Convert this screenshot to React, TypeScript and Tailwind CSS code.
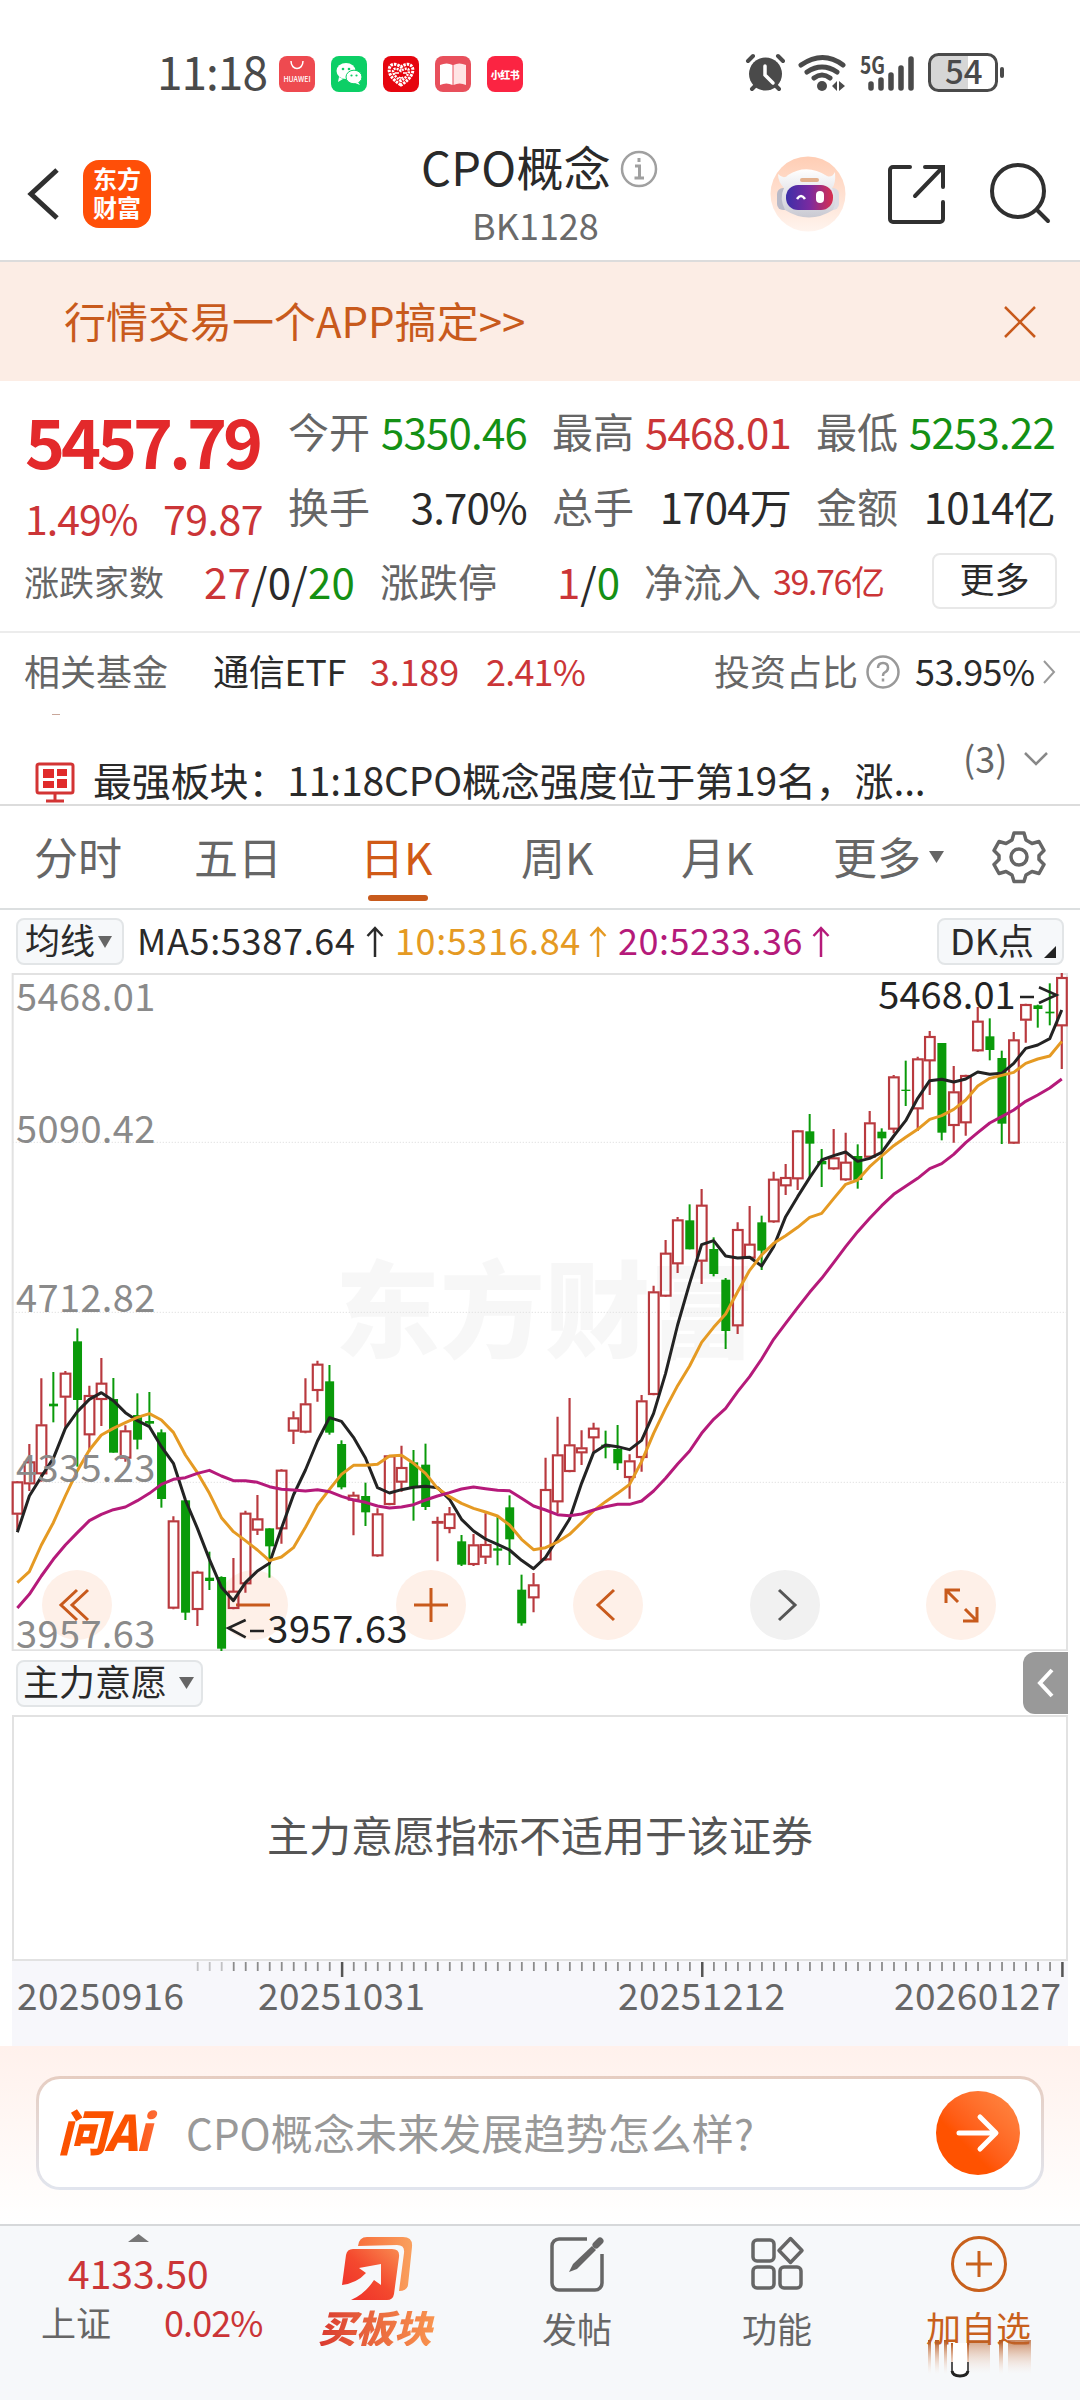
import type { ReactNode } from 'react';

type Candle = [dir: 'u' | 'd', top: number, bottom: number, high: number, low: number];

const UP = '#b93a3f';
const DOWN = '#0a9a0a';
const STEP = 36.015;
const FIRST = 52;

// [direction, body top, body bottom, high, low], grouped by the offset their values start from
const candleGroups: { dy: number; rows: Candle[] }[] = [
  {
    dy: 960,
    rows: [
      ['u', 605, 703, 603, 750],
      ['u', 545, 612, 492, 633],
      ['u', 434, 582, 295, 605],
      ['d', 371, 379, 276, 427],
      ['u', 279, 352, 273, 445],
      ['d', 184, 360, 145, 560],
      ['u', 346, 465, 317, 515],
      ['u', 309, 359, 234, 438],
      ['d', 357, 518, 294, 518],
      ['u', 452, 535, 436, 545],
      ['d', 405, 479, 340, 508],
      ['d', 423, 431, 336, 438],
      ['d', 457, 657, 448, 683],
      ['u', 722, 985, 709, 988],
      ['d', 661, 998, 661, 1020],
      ['u', 876, 989, 872, 1038],
      ['d', 893, 903, 815, 930],
      ['d', 891, 1106, 889, 1115],
      ['u', 933, 986, 834, 988],
      ['u', 699, 912, 692, 938],
      ['u', 716, 751, 645, 765],
      ['d', 745, 799, 745, 893],
      ['u', 570, 747, 568, 791],
      ['u', 413, 454, 394, 492],
      ['u', 371, 457, 295, 460],
      ['u', 252, 332, 242, 365],
      ['d', 304, 458, 255, 464],
      ['d', 492, 622, 481, 628],
      ['u', 645, 661, 635, 766],
    ],
  },
  {
    dy: 1140,
    rows: [
      ['d', 468, 517, 428, 558],
      ['u', 521, 648, 505, 650],
      ['u', 347, 494, 345, 496],
      ['u', 382, 427, 317, 455],
      ['d', 367, 442, 330, 542],
      ['d', 374, 501, 311, 510],
      ['u', 544, 550, 530, 664],
      ['u', 521, 566, 501, 580],
      ['d', 604, 674, 585, 678],
      ['u', 614, 674, 582, 678],
      ['u', 613, 652, 520, 672],
      ['d', 625, 632, 528, 676],
      ['d', 502, 598, 466, 675],
      ['d', 749, 850, 704, 857],
      ['u', 734, 774, 699, 817],
    ],
  },
  {
    dy: 570,
    rows: [
      ['u', 1018, 1230, 923, 1232],
      ['u', 914, 1056, 800, 1090],
      ['u', 884, 965, 744, 967],
      ['u', 893, 909, 841, 945],
      ['u', 834, 864, 818, 910],
      ['d', 884, 893, 842, 925],
      ['d', 897, 940, 825, 960],
      ['u', 932, 983, 913, 1046],
      ['u', 752, 923, 735, 965],
      ['u', 425, 734, 407, 736],
      ['u', 309, 439, 270, 441],
      ['u', 209, 342, 201, 369],
      ['d', 211, 298, 163, 298],
      ['u', 165, 334, 117, 402],
      ['d', 297, 372, 262, 379],
      ['d', 389, 543, 384, 597],
      ['u', 238, 528, 217, 552],
      ['u', 282, 325, 168, 325],
      ['d', 217, 302, 197, 360],
      ['u', 87, 216, 65, 218],
    ],
  },
  {
    dy: 0,
    rows: [
      ['u', 652, 678, 612, 705],
      ['u', 512, 657, 510, 690],
      ['d', 514, 551, 462, 655],
      ['d', 603, 613, 567, 681],
      ['u', 593, 627, 507, 629],
      ['u', 606, 660, 518, 662],
      ['d', 588, 660, 553, 686],
      ['u', 488, 592, 453, 594],
      ['d', 515, 535, 505, 657],
      ['u', 350, 508, 345, 520],
      ['d', 389, 393, 302, 438],
      ['u', 296, 447, 290, 513],
      ['u', 229, 303, 213, 405],
      ['d', 249, 518, 249, 541],
      ['u', 395, 497, 318, 548],
      ['u', 346, 489, 344, 527],
      ['u', 183, 273, 141, 275],
      ['d', 229, 270, 175, 301],
      ['d', 294, 491, 272, 552],
      ['u', 239, 550, 216, 552],
      ['u', 133, 181, 131, 248],
      ['d', 136, 147, 134, 203],
      ['d', 155, 160, 70, 196],
      ['u', 52, 198, 38, 327],
    ],
  },
];

const candles: Candle[] = candleGroups.flatMap(({ dy, rows }) =>
  rows.map(([dir, a, b, c, d]): Candle => [dir, a + dy, b + dy, c + dy, d + dy]),
);

const averages = [
  {
    color: '#232323',
    groups: [
      { dy: 960, v: [757, 648, 590, 535, 445, 395, 358, 338, 362, 398, 422, 440, 500, 550, 660, 745, 838, 922, 962, 908, 873, 850, 745, 645, 570, 483, 413, 424, 472] },
      { dy: 1140, v: [354, 443, 459, 449, 442, 439, 443, 478, 538, 573, 597, 613, 630, 661, 686] },
      { dy: 570, v: [1222, 1165, 1107, 1000, 908, 885, 890, 899, 871, 790, 670, 525, 400, 284, 272, 318, 324, 322, 348, 290, 200] },
      { dy: 0, v: [710, 653, 600, 587, 576, 604, 595, 577, 528, 482, 415, 362, 358, 366, 357, 336, 343, 340, 310, 265, 255, 236, 150] },
    ],
  },
  {
    color: '#e59a23',
    groups: [
      { dy: 960, v: [908, 875, 795, 728, 648, 572, 510, 465, 445, 428, 412, 401, 420, 457, 525, 578, 640, 713, 755, 782, 810, 842, 831, 803, 742, 675, 628, 583, 556] },
      { dy: 1140, v: [376, 373, 348, 346, 370, 400, 445, 470, 490, 505, 516, 528, 555, 598, 629] },
      { dy: 570, v: [1193, 1176, 1153, 1118, 1082, 1055, 1030, 1003, 935, 850, 775, 707, 648, 577, 532, 492, 425, 361, 315, 280, 257, 232, 202, 190] },
      { dy: 0, v: [716, 673, 660, 620, 588, 557, 532, 508, 478, 467, 448, 420, 378, 355, 346, 337, 310, 297, 288, 244] },
    ],
  },
  {
    color: '#b51a7a',
    groups: [
      { dy: 960, v: [984, 943, 888, 838, 795, 758, 722, 703, 689, 681, 662, 640, 613, 598, 593, 580, 571, 588, 602, 602, 607, 620, 628, 630, 633, 629, 635, 649, 660] },
      { dy: 1140, v: [487, 498, 504, 501, 494, 480, 468, 458, 447, 441, 446, 451, 452, 475, 498] },
      { dy: 570, v: [1080, 1094, 1097, 1092, 1080, 1070, 1063, 1063, 1053, 1023, 985, 942, 903, 850, 808, 775, 725, 680, 627, 568, 520, 473, 427, 385] },
      { dy: 0, v: [908, 860, 815, 775, 737, 703, 679, 655, 626, 611, 583, 548, 518, 489, 470, 450, 424, 405, 384, 357] },
    ],
  },
];

function linePoints(groups: { dy: number; v: number[] }[]) {
  return groups
    .flatMap(({ dy, v }) => v.map((n) => n + dy))
    .map((y, i) => `${FIRST + i * STEP},${y}`)
    .join(' ');
}

function StatusBar() {
  return (
    <div className="flex h-[116px] items-start pt-[52px] pl-[157px] text-[#4a4a4a]">
      <span className="-mt-[5px] w-[122px] text-[46px] leading-none tracking-[-1px]">11:18</span>
      <div className="flex gap-4 pt-1">
        <div className="flex size-9 flex-col items-center rounded-lg bg-[#ee4a50] text-white">
          <svg width="16" height="16" viewBox="0 0 16 16" fill="none" stroke="currentColor" strokeWidth="1.5">
            <path d="M2 5c0 10 12 10 12 0" />
          </svg>
          <span className="mt-0.5 text-[7px] leading-[10px] font-medium">HUAWEI</span>
        </div>
        <div className="size-9 rounded-lg bg-[#0ccf66]">
          <svg viewBox="0 0 36 36">
            <ellipse cx="15" cy="15" rx="9.5" ry="8" fill="#fff" />
            <path d="M8 21l-1 5 5-3z" fill="#fff" />
            <ellipse cx="23" cy="21" rx="8" ry="6.8" fill="#fff" stroke="#0ccf66" />
            <path d="M27 26l2 3-5-2z" fill="#fff" />
            <g fill="#0ccf66">
              <circle cx="12" cy="13" r="1.3" />
              <circle cx="18" cy="13" r="1.3" />
              <circle cx="20.5" cy="19.5" r="1.1" />
              <circle cx="25.5" cy="19.5" r="1.1" />
            </g>
          </svg>
        </div>
        <div className="size-9 rounded-lg bg-[#e6050f]">
          <svg viewBox="0 0 36 36" fill="none" stroke="#fff">
            <path d="M18 29C-2 17 7 2 18 11 29 2 38 17 18 29z" strokeWidth="3" strokeDasharray="2.5 1" />
            <path d="M18 25C5 16 10 9 18 15 26 9 31 16 18 25z" strokeWidth="2.5" strokeDasharray="2 1" />
            <path d="M12 17h4M20 17h4M16 21q2 2 4 0" strokeWidth="1.5" />
          </svg>
        </div>
        <div className="size-9 rounded-lg bg-[#e8505c]">
          <svg viewBox="0 0 36 36">
            <path d="M5 9q7-3 12.5 0v20q-6-3-12.5 0z" fill="#fff" />
            <path d="M31 9q-7-3-12.5 0v20q6-3 12.5 0z" fill="#ffe4e4" />
          </svg>
        </div>
        <div className="flex size-9 items-center justify-center rounded-lg bg-[#fb2442] text-[10px] font-black tracking-[-0.5px] text-white">
          小红书
        </div>
      </div>
      <svg className="ml-[217px]" width="270" height="44" viewBox="0 0 270 44" fill="none" stroke="#4a4a4a" strokeLinecap="round">
        {/* alarm */}
        <circle cx="25.5" cy="22" r="16.5" fill="#4a4a4a" stroke="none" />
        <path d="M8 9l5-5M38 4l5 5M12 37l4-4M39 37l-4-4" strokeWidth="4" />
        <path d="M25 14v9l8 8" stroke="#fff" strokeWidth="3.5" />
        {/* wifi */}
        <g strokeWidth="5">
          <path d="M61 13q22-15 42 0" />
          <path d="M67 20q15-10 30 0" />
          <path d="M74 26q8-6 16 0" />
        </g>
        <circle cx="82" cy="34" r="5" fill="#4a4a4a" stroke="none" />
        <path d="M97 29v10l-5-5zM99 29v10l6-5z" fill="#4a4a4a" stroke="none" />
        {/* signal */}
        <g strokeWidth="5.5">
          <path d="M131 32v4M141 28v8M151 23v13M161 16v20M171 7v29" />
        </g>
        <text x="120" y="22" fontSize="24" fontWeight="700" fill="#4a4a4a" stroke="none" textLength="25" lengthAdjust="spacingAndGlyphs">
          5G
        </text>
        {/* battery */}
        <path d="M197 2h31v37h-31a8 8 0 0 1-8-8V10a8 8 0 0 1 8-8z" fill="#d6d6d6" stroke="none" />
        <rect x="189.5" y="2.5" width="67" height="36" rx="9" strokeWidth="3" />
        <path d="M262 17v7" strokeWidth="4" />
        <text x="205" y="32" fontSize="33" fontWeight="500" fill="#4a4a4a" stroke="none">
          54
        </text>
      </svg>
    </div>
  );
}

function Header() {
  return (
    <header className="flex h-[146px] items-start border-b-2 border-[#dcdcdc]">
      <svg className="mt-[48px] ml-[24px]" width="40" height="60" viewBox="0 0 40 60" fill="none" stroke="#303030" strokeWidth="5">
        <path d="M33 6L7 30l26 24" />
      </svg>
      <div className="mt-[44px] ml-[19px] flex h-[68px] w-[68px] flex-col items-center justify-center gap-[3px] rounded-2xl bg-[#ff4f08] pb-1 text-[24px] leading-[26px] font-bold text-white">
        <span>东方</span>
        <span>财富</span>
      </div>
      <div className="ml-[270px] w-[237px]">
        <div className="flex items-start gap-[9px] pt-[26px] text-[#2a2a2a]">
          <span className="text-[47px] leading-none tracking-[0.3px]">CPO概念</span>
          <svg className="mt-[8px] shrink-0" width="38" height="38" viewBox="0 0 38 38" fill="none" stroke="#a0a0a0" strokeWidth="2.5">
            <circle cx="19" cy="19" r="17" />
            <path d="M19 8v4M15 16h4.5v12M14.5 28h9.5" strokeWidth="3" />
          </svg>
        </div>
        <div className="mt-[17px] pl-[51px] text-[36px] leading-none text-[#6a6a6a]">BK1128</div>
      </div>
      <svg className="mt-[38px] ml-[111px]" width="78" height="80" viewBox="0 0 78 80">
        <defs>
          <linearGradient id="halo" x2="0" y2="1">
            <stop stopColor="#ffcdb4" />
            <stop offset="1" stopColor="#fff4ee" />
          </linearGradient>
          <linearGradient id="visor">
            <stop stopColor="#3c2fa8" />
            <stop offset=".5" stopColor="#7a2aa0" />
            <stop offset="1" stopColor="#d8304f" />
          </linearGradient>
          <linearGradient id="helmet" x2="0" y2="1">
            <stop stopColor="#fff" />
            <stop offset="1" stopColor="#c9c9d2" />
          </linearGradient>
        </defs>
        <circle cx="39" cy="40" r="37.5" fill="url(#halo)" />
        <rect x="8" y="34" width="14" height="22" rx="6" fill="#b9bac8" />
        <rect x="56" y="34" width="14" height="22" rx="6" fill="#dcdce4" />
        <path d="M9 20q6 6 10 1Q38 9 58 22q5 2 8-4 1 12-3 16 6 12 1 22-24 15-48 0-6-12-1-22-6-6-6-14z" fill="url(#helmet)" />
        <rect x="31" y="24" width="19" height="4" rx="2" fill="#e3b08d" />
        <rect x="17" y="31" width="47" height="25" rx="12" fill="url(#visor)" />
        <path d="M28 45q4-6 8 0" stroke="#fff" strokeWidth="2.5" fill="none" />
        <rect x="47" y="37" width="8" height="12" rx="4" fill="#fff" />
      </svg>
      <svg className="mt-[47px] ml-[39px]" width="62" height="62" viewBox="0 0 62 62" fill="none" stroke="#303030" strokeWidth="4" strokeLinecap="round">
        <path d="M24 4H7a3 3 0 0 0-3 3v49a3 3 0 0 0 3 3h47a3 3 0 0 0 3-3V39" />
        <path d="M39 4h18v20M56 5L29 33" />
      </svg>
      <svg className="mt-[46px] ml-[41px]" width="64" height="64" viewBox="0 0 64 64" fill="none" stroke="#303030" strokeWidth="4" strokeLinecap="round">
        <circle cx="29" cy="29" r="26" />
        <path d="M48 48l11 11" />
      </svg>
    </header>
  );
}

function Banner() {
  return (
    <div className="flex h-[119px] items-center justify-between bg-[#fcede5] pr-[43px] pl-[64px] text-[#c85a1c]">
      <span className="-mt-[4px] text-[42px] leading-none">行情交易一个APP搞定&gt;&gt;</span>
      <svg width="34" height="34" viewBox="0 0 34 34" stroke="currentColor" strokeWidth="2.5">
        <path d="M2 2l30 30M32 2L2 32" />
      </svg>
    </div>
  );
}

function Stat({ label, value, tone }: { label: string; value: string; tone: string }) {
  return (
    <div className="flex h-[75px] w-[239px] items-center justify-between">
      <span className="-mt-px text-[41px] text-[#666]">{label}</span>
      <span className={`text-[42px] tracking-[-0.8px] ${tone}`}>{value}</span>
    </div>
  );
}

function Quote() {
  return (
    <section className="h-[252px] border-b-2 border-[#ececec] pt-3 leading-none">
      <div className="flex h-[150px]">
        <div className="w-[288px] pl-[25px]">
          <div className="flex h-[94px] items-center text-[68px] font-bold tracking-[-4.1px] text-[#e3292b]">5457.79</div>
          <div className="flex h-[56px] items-center pt-[5px] text-[41px] tracking-[-1px] text-[#cb3537]">
            <span className="w-[138px]">1.49%</span>
            <span className="tracking-[-0.5px]">79.87</span>
          </div>
        </div>
        <div className="grid grid-cols-[264px_264px_239px]">
          <Stat label="今开" value="5350.46" tone="text-[#149014]" />
          <Stat label="最高" value="5468.01" tone="text-[#cb3537]" />
          <Stat label="最低" value="5253.22" tone="text-[#149014]" />
          <Stat label="换手" value="3.70%" tone="text-[#2a2a2a]" />
          <Stat label="总手" value="1704万" tone="text-[#2a2a2a]" />
          <Stat label="金额" value="1014亿" tone="text-[#2a2a2a]" />
        </div>
      </div>
      <div className="flex h-[75px] items-center text-[39px] text-[#666]">
        <span className="ml-[24px] w-[180px] text-[35px]">涨跌家数</span>
        <span className="w-[176px] text-[42px] tracking-[0.2px] text-[#2a2a2a]">
          <span className="text-[#cb3537]">27</span>/0/<span className="text-[#149014]">20</span>
        </span>
        <span className="w-[177px]">涨跌停</span>
        <span className="w-[87px] text-[42px] text-[#2a2a2a]">
          <span className="text-[#cb3537]">1</span>/<span className="text-[#149014]">0</span>
        </span>
        <span className="w-[129px]">净流入</span>
        <span className="w-[159px] text-[34px] tracking-[-1.4px] text-[#cb3537]">39.76亿</span>
        <span className="flex h-[56px] w-[125px] items-center justify-center rounded-lg border-2 border-[#e8e8e8] pb-[6px] text-[35px] text-[#2a2a2a]">
          更多
        </span>
      </div>
    </section>
  );
}

function FundRow() {
  return (
    <div className="flex h-[73px] items-center text-[36px] leading-none text-[#666]">
      <span className="ml-[24px] w-[189px]">相关基金</span>
      <span className="w-[157px] tracking-[-0.3px] text-[#2a2a2a]">通信ETF</span>
      <span className="w-[116px] tracking-[-0.2px] text-[#cb3537]">3.189</span>
      <span className="w-[228px] tracking-[-0.8px] text-[#cb3537]">2.41%</span>
      <span className="w-[151px]">投资占比</span>
      <svg className="mt-1" width="36" height="36" viewBox="0 0 36 36" fill="none" stroke="#999" strokeWidth="2.5">
        <circle cx="18" cy="18" r="15.5" />
        <path d="M13 14q0-5 5-5t5 5q0 3-4 5-1 1-1 3M18 24.5v3" />
      </svg>
      <span className="ml-[14px] w-[127px] tracking-[-0.6px] text-[#2a2a2a]">53.95%</span>
      <svg className="mt-1" width="14" height="28" viewBox="0 0 14 28" fill="none" stroke="#999" strokeWidth="2">
        <path d="M2 3l10 11L2 25" />
      </svg>
    </div>
  );
}

function NewsRow() {
  return (
    <div className="flex h-[100px] items-start border-b-2 border-[#dcdcdc] leading-none">
      <div className="ml-[34px] w-[59px] pt-[8px]">
        <div className="ml-[18px] h-px w-[8px] bg-[#c9a79a]" />
        <svg className="mt-[46px]" width="42" height="42" viewBox="0 0 42 42" fill="none" stroke="#d33434" strokeWidth="3">
          <rect x="3" y="3" width="36" height="29" rx="2" />
          <path d="M21 32v8M12 40h18" />
          <path d="M9 8h11v9H9zM23 8h10v7H23zM9 20h11v7H9zM23 18h10v9H23z" fill="#e02b2b" stroke="none" />
        </svg>
      </div>
      <div className="flex h-[98px] w-[872px] items-start pt-[54px] text-[39px] tracking-[-0.15px] text-[#2a2a2a]">
        最强板块：11:18CPO概念强度位于第19名，涨...
      </div>
      <div className="flex items-center gap-[16px] pt-[33px] text-[36px] text-[#666]">
        <span className="-ml-[2px] w-[44px]">(3)</span>
        <svg className="mt-1" width="26" height="16" viewBox="0 0 26 16" fill="none" stroke="#888" strokeWidth="2.5">
          <path d="M2 2l11 11L24 2" />
        </svg>
      </div>
    </div>
  );
}

function Tab({ children, width }: { children: ReactNode; width: string }) {
  return <span className={`flex h-full items-center pb-[2px] ${width}`}>{children}</span>;
}

function PeriodTabs() {
  return (
    <nav className="flex h-[104px] items-center border-b-2 border-[#dcdfe0] pl-[34px] text-[44px] leading-none text-[#666]">
      <Tab width="w-[160px]">分时</Tab>
      <Tab width="w-[166px]">五日</Tab>
      <div className="relative flex h-full w-[161px] items-center pb-[2px] text-[#d05a17]">
        日K
        <span className="absolute bottom-[7px] left-[8px] h-[6px] w-[60px] rounded-full bg-[#c85a1c]" />
      </div>
      <Tab width="w-[160px]">周K</Tab>
      <Tab width="w-[152px]">月K</Tab>
      <Tab width="w-[96px]">更多</Tab>
      <svg width="15" height="12" viewBox="0 0 15 12" fill="#666">
        <path d="M0 0h15L7.5 12z" />
      </svg>
      <svg className="ml-[47px]" width="56" height="56" viewBox="0 0 56 56" fill="none" stroke="#666" strokeWidth="3.5" strokeLinejoin="round">
        <path d="M23 4h10l2 7 6 3.5 7-2 5 9-5 5v4l5 5-5 9-7-2-6 3.5-2 6.5H23l-2-6.5-6-3.5-7 2-5-9 5-5v-4l-5-5 5-9 7 2 6-3.5z" />
        <circle cx="28" cy="28" r="8" />
      </svg>
    </nav>
  );
}

function UpArrow() {
  return (
    <svg width="18" height="32" viewBox="0 0 18 32" fill="none" stroke="currentColor" strokeWidth="2.5">
      <path d="M9 31V2M1.5 10L9 2l7.500 8" />
    </svg>
  );
}

function AverageBar() {
  return (
    <div className="flex h-[63px] items-center pl-[16px] text-[36px] leading-none text-[#2a2a2a]">
      <span className="flex h-[47px] w-[108px] items-center gap-[3px] rounded-lg border-2 border-[#e2e5e7] bg-[#f6f8fa] pl-[7px] text-[35px]">
        <span className="-mt-[6px]">均线</span>
        <svg width="14" height="12" viewBox="0 0 14 12" fill="#666">
          <path d="M0 0h14L7 12z" />
        </svg>
      </span>
      <span className="-mt-[6px] ml-[13px] w-[229px] tracking-[0.7px]">MA5:5387.64</span>
      <UpArrow />
      <span className="-mt-[6px] ml-[11px] w-[194px] tracking-[0.6px] text-[#e59a23]">10:5316.84</span>
      <span className="text-[#e59a23]">
        <UpArrow />
      </span>
      <span className="-mt-[6px] ml-[11px] w-[194px] tracking-[0.5px] text-[#b51a7a]">20:5233.36</span>
      <span className="text-[#b51a7a]">
        <UpArrow />
      </span>
      <span className="ml-[107px] flex h-[47px] w-[127px] items-center gap-[8px] rounded-lg border-2 border-[#e2e5e7] bg-[#f6f8fa] pl-[11px]">
        <span className="-mt-[6px] w-[86px]">DK点</span>
        <svg className="mt-5" width="12" height="12" viewBox="0 0 12 12" fill="#232323">
          <path d="M12 0v12H0z" />
        </svg>
      </span>
    </div>
  );
}

const chartButtons: { left: string; tone: string; icon: ReactNode }[] = [
  { left: 'left-[42px]', tone: 'bg-[#fef0e8] text-[#c85a1c]', icon: <path d="M35 20L19 35l16 15M46 20L30 35l16 15" /> },
  { left: 'left-[218px]', tone: 'bg-[#fef0e8] text-[#c85a1c]', icon: <path d="M18 35h34" /> },
  { left: 'left-[396px]', tone: 'bg-[#fef0e8] text-[#c85a1c]', icon: <path d="M18 35h34M35 18v34" /> },
  { left: 'left-[573px]', tone: 'bg-[#fef0e8] text-[#c85a1c]', icon: <path d="M41 20L25 35l16 15" /> },
  { left: 'left-[750px]', tone: 'bg-[#f1f1f1] text-[#555]', icon: <path d="M29 20l16 15-16 15" /> },
  { left: 'left-[926px]', tone: 'bg-[#fef0e8] text-[#c85a1c]', icon: <path d="M20 33V20h14M21 21l11 11M51 37v14H37M50 50L39 39" /> },
];

function KLineChart() {
  return (
    <div className="relative h-[678px]">
      {chartButtons.map(({ left, tone, icon }) => (
        <button key={left} className={`absolute top-[597px] size-[70px] rounded-full ${left} ${tone}`}>
          <svg viewBox="0 0 70 70" fill="none" stroke="currentColor" strokeWidth="3">
            {icon}
          </svg>
        </button>
      ))}
      <svg className="relative block" width="1080" height="678" viewBox="0 39 3240 2034">
        <text x="1005" y="1168" fontSize="315" fontWeight="900" fill="#f5f5f5" fillOpacity=".8">
          东方财富
        </text>
        <g stroke="#e2e2e2" strokeWidth="6" fill="none">
          <path d="M38 42H3201V2071H38z" />
          <path d="M38 547H3201M38 1057H3201M38 1567H3201" strokeWidth="3" strokeDasharray="4 5" />
        </g>
        {candles.map(([dir, top, bottom, high, low], i) => {
          const x = FIRST + i * STEP;
          if (dir === 'd') {
            return (
              <g key={i} fill={DOWN}>
                <rect x={x - 3} y={high} width="6" height={low - high} />
                <rect x={x - 13} y={top} width="27" height={bottom - top} />
              </g>
            );
          }
          return (
            <g key={i} fill="none" stroke={UP} strokeWidth="6.5">
              <path d={`M${x} ${high}V${top}M${x} ${bottom}V${low}`} />
              <rect x={x - 14} y={top + 2} width="29" height={Math.max(bottom - top - 4, 2)} />
            </g>
          );
        })}
        {averages.map(({ color, groups }) => (
          <polyline key={color} points={linePoints(groups)} fill="none" stroke={color} strokeWidth="9" strokeLinejoin="round" />
        ))}
        <g fontSize="114" fill="#8a8a8a">
          <text x="48" y="152" textLength="418">5468.01</text>
          <text x="48" y="548" textLength="418">5090.42</text>
          <text x="48" y="1055" textLength="418">4712.82</text>
          <text x="48" y="1565" textLength="418">4335.23</text>
          <text x="48" y="2063" textLength="418">3957.63</text>
        </g>
        <g fontSize="114" fill="#232323">
          <text x="2635" y="146" textLength="412">5468.01</text>
          <text x="802" y="2048" textLength="421">3957.63</text>
        </g>
        <g fill="none" stroke="#232323" strokeWidth="8">
          <path d="M3060 111h42M3117 82l52 23-52 24" />
          <path d="M737 1980l-52 24 52 28M750 2013h42" />
        </g>
      </svg>
    </div>
  );
}

function Indicator() {
  return (
    <section className="leading-none">
      <div className="flex h-[64px] items-center justify-between pr-[12px] pl-[16px]">
        <span className="flex h-[47px] w-[187px] items-center gap-[12px] rounded-lg border-2 border-[#e2e5e7] bg-[#f6f8fa] pl-[5px] text-[36px] text-[#2a2a2a]">
          <span className="-mt-[6px]">主力意愿</span>
          <svg width="15" height="12" viewBox="0 0 15 12" fill="#666">
            <path d="M0 0h15L7.5 12z" />
          </svg>
        </span>
        <span className="flex h-[62px] w-[45px] items-center justify-center rounded-l-xl bg-[#999]">
          <svg width="18" height="30" viewBox="0 0 18 30" fill="none" stroke="#fff" strokeWidth="4">
            <path d="M15 2L3 15l12 13" />
          </svg>
        </span>
      </div>
      <div className="mx-[12px] flex h-[246px] items-center justify-center border-2 border-[#e2e2e2] pb-[8px] text-[42px] text-[#555]">
        主力意愿指标不适用于该证券
      </div>
    </section>
  );
}

function DateAxis() {
  return (
    <div className="mx-[12px] h-[85px] bg-[#f7f7fb]">
      <svg className="block" width="1056" height="17" viewBox="12 0 1056 17">
        {Array.from({ length: 73 }, (_, i) => {
          const major = i % 30 === 12;
          return (
            <rect
              key={i}
              x={196.8 + i * 12.005}
              y="1"
              width={major ? 2.5 : 1.8}
              height={major ? 15 : 9}
              fill={major ? '#555' : '#8c8c8c'}
              opacity={i < 3 ? 0.5 : 1}
            />
          );
        })}
      </svg>
      <div className="-mt-[2px] flex text-[37px] leading-none tracking-[0.4px] text-[#666]">
        <span className="ml-[5px] w-[241px]">20250916</span>
        <span className="w-[360px]">20251031</span>
        <span className="w-[276px]">20251212</span>
        <span>20260127</span>
      </div>
    </div>
  );
}

function AskBar() {
  return (
    <section className="h-[178px] bg-linear-to-b from-[#fff1ec] to-white px-[36px] pt-[30px] leading-none">
      <div className="h-[114px] rounded-[24px] bg-linear-to-b from-[#e6cdc1] to-[#e1e5ee] p-[3px]">
        <div className="flex h-full items-center rounded-[21px] bg-white">
          <span className="-mt-[4px] ml-[19px] w-[128px] bg-linear-to-r from-[#fb5200] from-60% to-[#ff8a5c] bg-clip-text pb-1 text-[49px] font-black tracking-[-2px] text-transparent italic">
            问Ai
          </span>
          <span className="-mt-[3px] w-[750px] text-[42px] tracking-[0.1px] text-[#999]">CPO概念未来发展趋势怎么样?</span>
          <span className="flex size-[84px] items-center justify-center rounded-full bg-linear-to-bl from-[#ff8a45] to-[#ff5200] to-65%">
            <svg width="46" height="40" viewBox="0 0 46 40" fill="none" stroke="#fff" strokeWidth="5" strokeLinecap="round" strokeLinejoin="round">
              <path d="M4 20h36M25 4l16 16-16 16" />
            </svg>
          </span>
        </div>
      </div>
    </section>
  );
}

function BottomNav() {
  return (
    <footer className="flex h-[176px] border-t-2 border-[#d6d8da] bg-[#f6f8fa] text-[35px] leading-none text-[#666]">
      <div className="w-[277px]">
        <svg className="mt-[8px] ml-[128px]" width="21" height="8" viewBox="0 0 21 8" fill="#777">
          <path d="M0 8L10.5 0 21 8z" />
        </svg>
        <div className="mt-[11px] pl-[68px] text-[39px] text-[#cb3537]">4133.50</div>
        <div className="mt-[11px] flex items-center pl-[41px]">
          <span className="w-[123px]">上证</span>
          <span className="text-[36px] tracking-[-0.9px] text-[#cb3537]">0.02%</span>
        </div>
      </div>
      <div className="flex w-[200px] flex-col items-center pt-[10px]">
        <svg width="72" height="66" viewBox="0 0 72 66">
          <defs>
            <linearGradient id="back" x2="1">
              <stop stopColor="#f8703c" />
              <stop offset="1" stopColor="#f9a05e" />
            </linearGradient>
            <linearGradient id="front" x1="0" y1="1" x2="1" y2="0">
              <stop stopColor="#ee2d2a" />
              <stop offset=".5" stopColor="#f4492e" />
              <stop offset="1" stopColor="#f98a50" />
            </linearGradient>
          </defs>
          <path d="M17 10q1-9 9-9h36q10 0 9 10l-4 38q-1 6-9 6l5-38q1-8-7-8z" fill="url(#back)" />
          <path d="M5 19q1-6 7-6h39q8 0 7 8l-5 37q-1 6-7 6H10q14-6 23-20l7 5 0-21-22 4 7 5q-9 10-24 12z" fill="url(#front)" />
        </svg>
        <span className="mt-[6px] bg-linear-to-r from-[#d9372f] to-[#f9954f] bg-clip-text pr-1 text-[38px] font-black text-transparent italic">
          买板块
        </span>
      </div>
      <div className="flex w-[200px] flex-col items-center pt-[10px]">
        <svg width="56" height="56" viewBox="0 0 56 56" fill="none" stroke="#666" strokeWidth="3.5">
          <path d="M38 3H10a7 7 0 0 0-7 7v37a7 7 0 0 0 7 7h36a7 7 0 0 0 7-7V18" />
          <path d="M20 36l4-8 19-18 4 4-19 19z" fill="#666" stroke="none" />
          <path d="M47 9l4-4" strokeWidth="7" strokeLinecap="round" />
        </svg>
        <span className="mt-[18px]">发帖</span>
      </div>
      <div className="flex w-[200px] flex-col items-center pt-[10px]">
        <svg width="56" height="56" viewBox="0 0 56 56" fill="none" stroke="#666" strokeWidth="3.5" strokeLinejoin="round">
          <rect x="4" y="4" width="21" height="21" rx="4" />
          <rect x="4" y="31" width="21" height="21" rx="4" />
          <rect x="31" y="31" width="21" height="21" rx="4" />
          <path d="M41.5 2.5L53 14.5l-11.5 12L30 14.5z" />
        </svg>
        <span className="mt-[18px]">功能</span>
      </div>
      <div className="flex w-[203px] flex-col items-center pt-[9px] text-[#c8601c]">
        <svg width="58" height="58" viewBox="0 0 58 58" fill="none" stroke="currentColor" strokeWidth="3">
          <circle cx="29" cy="29" r="26.5" />
          <path d="M16 29h26M29 16v26" />
        </svg>
        <span className="mt-[16px]">加自选</span>
        <svg className="-mt-[4px]" width="110" height="38" viewBox="0 0 110 38">
          <defs>
            <linearGradient id="fade" x2="0" y2="1">
              <stop stopColor="#b5561c" />
              <stop offset="1" stopColor="#f6d9c8" stopOpacity="0" />
            </linearGradient>
          </defs>
          <g fill="url(#fade)">
            <rect x="4" y="0" width="3" height="34" />
            <rect x="11" y="0" width="4" height="34" />
            <rect x="20" y="0" width="3" height="34" />
            <rect x="44" y="0" width="22" height="34" opacity=".55" />
            <rect x="75" y="0" width="4" height="34" />
            <rect x="84" y="0" width="23" height="34" opacity=".7" />
          </g>
          <path d="M28 3v28q1 5 8 5t8-5V3" fill="#fff" stroke="url(#fade)" strokeWidth="2" />
          <path d="M28 22v9q1 5 8 5t8-5v-9" fill="none" stroke="#555" strokeWidth="2" />
          <path d="M28 31q1 5 8 5t8-5" fill="none" stroke="#222" strokeWidth="3" />
        </svg>
      </div>
    </footer>
  );
}

export default function App() {
  return (
    <div className="h-[2400px] w-[1080px] overflow-hidden bg-white font-['Noto_Sans_CJK_SC','Noto_Sans',sans-serif] whitespace-nowrap">
      <StatusBar />
      <Header />
      <Banner />
      <Quote />
      <FundRow />
      <NewsRow />
      <PeriodTabs />
      <AverageBar />
      <KLineChart />
      <Indicator />
      <DateAxis />
      <AskBar />
      <BottomNav />
    </div>
  );
}
